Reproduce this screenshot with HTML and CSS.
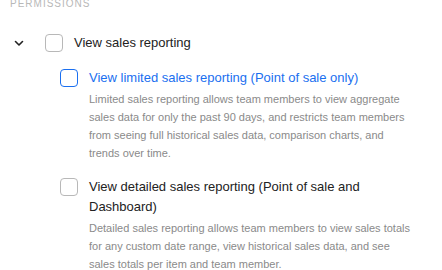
FILE: index.html
```html
<!DOCTYPE html>
<html lang="en">
<head>
    <meta charset="UTF-8">
    <meta name="viewport" content="width=device-width, initial-scale=1.0">
    <title>Permissions</title>
    <link rel="stylesheet" href="styles.css">
</head>
<body>
    <div class="permissions">
        <div class="heading">Permissions</div>

        <div class="group">
            <div class="group-row">
                <span class="chevron">
                    <svg width="10" height="7" viewBox="0 0 10 7"><path d="M1.5 1.5 L5 5 L8.5 1.5" fill="none" stroke="#222" stroke-width="1.6" stroke-linecap="round" stroke-linejoin="round"/></svg>
                </span>
                <span class="box"></span>
                <span class="group-label">View sales reporting</span>
            </div>

            <div class="options">
                <div class="option">
                    <span class="box focused"></span>
                    <div class="option-label active">View limited sales reporting (Point of sale only)</div>
                    <p class="option-desc">Limited sales reporting allows team members to view aggregate sales data for only the past 90 days, and restricts team members from seeing full historical sales data, comparison charts, and trends over time.</p>
                </div>
                <div class="option">
                    <span class="box"></span>
                    <div class="option-label">View detailed sales reporting (Point of sale and Dashboard)</div>
                    <p class="option-desc">Detailed sales reporting allows team members to view sales totals for any custom date range, view historical sales data, and see sales totals per item and team member.</p>
                </div>
            </div>
        </div>
    </div>
</body>
</html>
```

FILE: styles.css
```css
body {
    margin: 0;
    background-color: #fff;
    font-family: 'Liberation Sans', Arial, sans-serif;
    color: #222;
}
.permissions {
    padding-left: 10px;
    width: 400px;
}
.heading {
    margin-top: -2px;
    font-size: 10px;
    line-height: 12px;
    letter-spacing: 1px;
    text-transform: uppercase;
    color: #b8b8b8;
}
.group-row {
    display: flex;
    align-items: center;
    margin-top: 23px;
}
.chevron {
    width: 18px;
    display: flex;
    justify-content: center;
    margin-right: 17px;
}
.chevron svg {
    display: block;
}
.box {
    display: block;
    box-sizing: border-box;
    width: 18px;
    height: 18px;
    border: 1px solid #b8b8b8;
    border-radius: 4px;
    background-color: #fff;
}
.box.focused {
    border: 1.5px solid #1a6ff0;
}
.group-label {
    margin-left: 11px;
    font-size: 13px;
    line-height: 20px;
}
.options {
    padding-left: 50px;
    margin-top: 15px;
}
.option {
    display: grid;
    grid-template-columns: 18px 1fr;
    column-gap: 11px;
    margin-bottom: 15px;
}
.option .box {
    margin-top: 1px;
}
.option-label {
    font-size: 13px;
    line-height: 20px;
}
.option-label.active {
    color: #1a6ff0;
}
.option-desc {
    grid-column: 2;
    margin: 2px 0 0;
    font-size: 11px;
    line-height: 18px;
    color: #8a8a8a;
}
```
